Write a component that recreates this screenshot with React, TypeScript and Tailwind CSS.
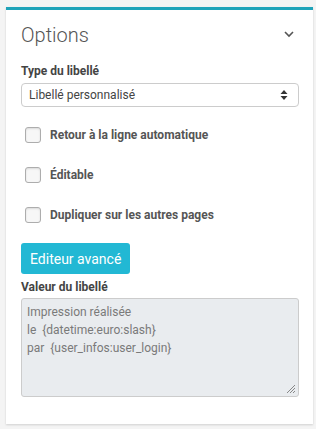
import React from 'react';

const Check = ({ label }: { label: string }) => (
  <label className="flex items-center gap-[9px] pl-[4px] h-[20px]">
    <span className="w-[16px] h-[16px] rounded-[3px] border border-[#adadad] bg-[#f7f7f7] shadow-[inset_0_1px_2px_rgba(0,0,0,0.12)]" />
    <span className="text-[12px] font-bold text-[#555]">{label}</span>
  </label>
);

export default function App() {
  return (
    <div className="min-h-[429px] w-[316px] bg-[#f4f4f4] pt-[7px] pl-[6px] font-['Roboto',sans-serif]">
      <div className="w-[307px] h-[417px] bg-white border-t-[3px] border-[#1fa3b9] shadow-[0_1px_2px_rgba(0,0,0,0.15)] px-[15px]">
        <div className="flex items-start justify-between pt-[15px]">
          <h3 className="text-[20px] font-light text-[#555] leading-[20px]">Options</h3>
          <svg width="12" height="8" viewBox="0 0 12 8" className="mr-[3px] mt-[5px]">
            <path d="M2 2l4 4 4-4" fill="none" stroke="#555" strokeWidth="1.6" />
          </svg>
        </div>
        <div className="mt-[18px] text-[12px] font-bold text-[#444] leading-[16px]">Type du libellé</div>
        <div className="mt-[4px] w-[278px] h-[24px] rounded-[4px] border border-[#ccc] flex items-center justify-between pl-[7px] pr-[10px]">
          <span className="text-[12px] text-[#444]">Libellé personnalisé</span>
          <svg width="8" height="12" viewBox="0 0 8 12">
            <path d="M4 1L7.5 5H0.5z M4 11L0.5 7h7z" fill="#333" />
          </svg>
        </div>
        <div className="mt-[18px] flex flex-col gap-[20px]">
          <Check label="Retour à la ligne automatique" />
          <Check label="Éditable" />
          <Check label="Dupliquer sur les autres pages" />
        </div>
        <button className="mt-[18px] h-[31px] px-[9px] rounded-[3px] bg-[#22b8d4] text-white text-[14px] leading-none">
          Editeur avancé
        </button>
        <div className="mt-[5px] text-[12px] font-bold text-[#444] leading-[16px]">Valeur du libellé</div>
        <div className="mt-[3px] w-[278px] h-[99px] rounded-[3px] border border-[#ccc] bg-[#e9ecef] px-[5px] pt-[4px] text-[12px] leading-[18px] text-[#7a7a7a] relative">
          <div>Impression réalisée</div>
          <div>le &nbsp;{'{datetime:euro:slash}'}</div>
          <div>par &nbsp;{'{user_infos:user_login}'}</div>
          <svg width="10" height="10" viewBox="0 0 10 10" className="absolute right-[2px] bottom-[2px]">
            <path d="M9 1L1 9M9 4L4 9M9 7L7 9" stroke="#888" strokeWidth="1" />
          </svg>
        </div>
      </div>
    </div>
  );
}
